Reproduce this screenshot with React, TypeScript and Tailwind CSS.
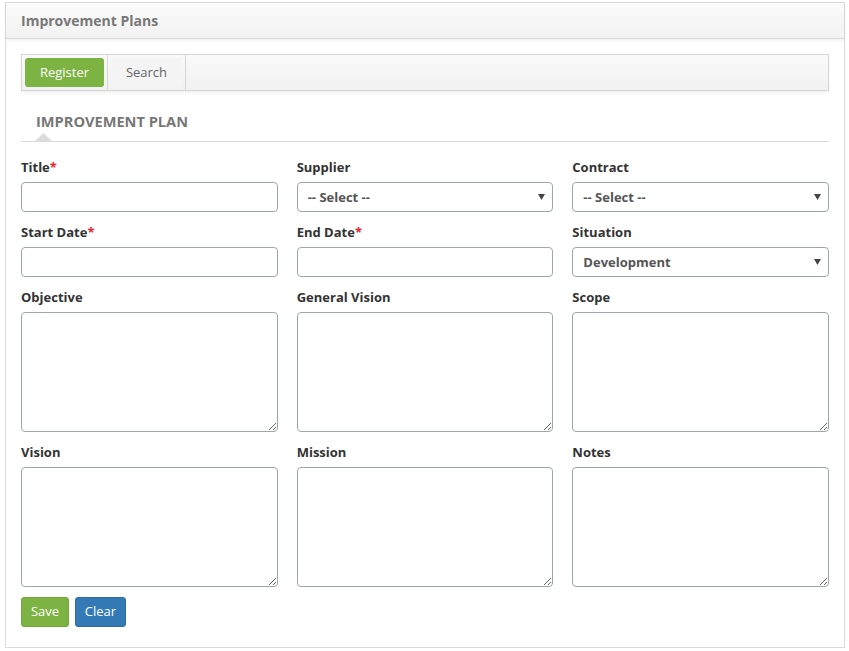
import React from "react";

const inputCls =
  "block w-full h-[30px] rounded-[4px] border border-[#9ea7a8] bg-white px-[10px] text-[13px] text-[#444] outline-none";

const areaCls =
  "block w-full h-[120px] rounded-[4px] border border-[#9ea7a8] bg-white px-[10px] py-[6px] text-[13px] text-[#444] outline-none resize";

function Label({ text, required }: { text: string; required?: boolean }) {
  return (
    <label className="block h-[20px] mb-[5px] text-[13px] leading-[20px] font-bold text-[#333]">
      {text}
      {required && <span className="text-[#e8202a]">*</span>}
    </label>
  );
}

function Select({ value }: { value: string }) {
  return (
    <div className="relative">
      <select
        className="block w-full h-[30px] appearance-none rounded-[4px] border border-[#9ea7a8] bg-white pl-[10px] pr-[24px] pt-[2px] text-[13px] font-bold text-[#555] outline-none"
        defaultValue={value}
      >
        <option>{value}</option>
      </select>
      <svg
        className="pointer-events-none absolute right-[8px] top-[12px]"
        width="7"
        height="6"
        viewBox="0 0 7 6"
      >
        <path d="M0 0 H7 L3.5 6 Z" fill="#444" />
      </svg>
    </div>
  );
}

export default function App() {
  return (
    <div
      className="min-h-screen bg-white pl-[5px] pr-[4px] pt-[2px] pb-[3px]"
      style={{ fontFamily: '"Open Sans", "Liberation Sans", sans-serif' }}
    >
      <div className="border border-[#dadada] bg-white">
        {/* Header */}
        <div className="h-[36px] flex items-center px-[15px] border-b border-[#dadada] bg-gradient-to-b from-[#fbfbfb] to-[#f2f2f2] shadow-[0_2px_3px_rgba(0,0,0,0.06)]">
          <h1 className="text-[14px] font-bold text-[#787878]">Improvement Plans</h1>
        </div>

        <div className="px-[15px] pt-[15px] pb-[20px]">
          {/* Tabs */}
          <div className="flex h-[37px] border border-[#d6d6d6] bg-gradient-to-b from-[#fafafa] to-[#f1f1f1] shadow-[0_2px_3px_rgba(0,0,0,0.06)]">
            <div className="p-[3px] border-r border-[#d6d6d6]">
              <button className="h-[29px] w-[79px] rounded-[3px] bg-[#7cb342] text-[13px] text-white">
                Register
              </button>
            </div>
            <div className="p-[3px] border-r border-[#d6d6d6]">
              <button className="h-[29px] w-[71px] bg-[#f4f4f4] text-[13px] text-[#666]">
                Search
              </button>
            </div>
          </div>

          {/* Section title */}
          <div className="relative mt-[20px] border-b border-[#dcdcdc] pb-[10px] pl-[15px]">
            <h2 className="text-[14.6px] leading-[20px] font-bold uppercase text-[#777]">
              Improvement Plan
            </h2>
            <svg
              className="absolute left-[14px] bottom-0"
              width="17"
              height="8"
              viewBox="0 0 17 8"
            >
              <path d="M0 8 L8.5 0 L17 8 Z" fill="#dcdcdc" />
            </svg>
          </div>

          {/* Form */}
          <div className="mt-[15px] grid grid-cols-3 gap-x-[19px] gap-y-[10px]">
            <div>
              <Label text="Title" required />
              <input className={inputCls} />
            </div>
            <div>
              <Label text="Supplier" />
              <Select value="-- Select --" />
            </div>
            <div>
              <Label text="Contract" />
              <Select value="-- Select --" />
            </div>

            <div>
              <Label text="Start Date" required />
              <input className={inputCls} />
            </div>
            <div>
              <Label text="End Date" required />
              <input className={inputCls} />
            </div>
            <div>
              <Label text="Situation" />
              <Select value="Development" />
            </div>

            <div>
              <Label text="Objective" />
              <textarea className={areaCls} />
            </div>
            <div>
              <Label text="General Vision" />
              <textarea className={areaCls} />
            </div>
            <div>
              <Label text="Scope" />
              <textarea className={areaCls} />
            </div>

            <div>
              <Label text="Vision" />
              <textarea className={areaCls} />
            </div>
            <div>
              <Label text="Mission" />
              <textarea className={areaCls} />
            </div>
            <div>
              <Label text="Notes" />
              <textarea className={areaCls} />
            </div>
          </div>

          {/* Actions */}
          <div className="mt-[10px] flex gap-[6px]">
            <button className="h-[30px] w-[48px] rounded-[3px] border border-[#74a93c] bg-[#7cb342] text-[13px] text-white">
              Save
            </button>
            <button className="h-[30px] w-[51px] rounded-[3px] border border-[#2e6da4] bg-[#337ab7] text-[13px] text-white">
              Clear
            </button>
          </div>
        </div>
      </div>
    </div>
  );
}
